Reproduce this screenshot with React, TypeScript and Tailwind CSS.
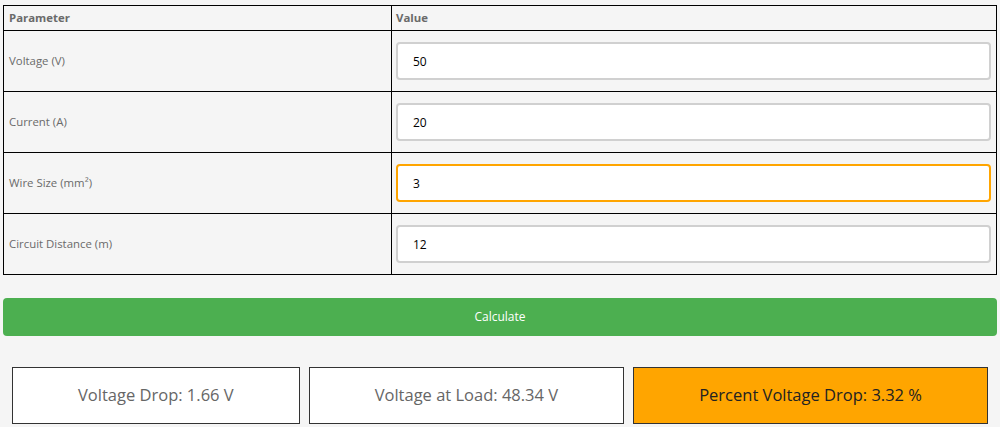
import { useState } from "react";

const rows = [
  { label: "Voltage (V)", value: "50" },
  { label: "Current (A)", value: "20" },
  { label: "Wire Size (mm²)", value: "3", focused: true },
  { label: "Circuit Distance (m)", value: "12" },
];

function App() {
  const [values, setValues] = useState(rows.map((r) => r.value));

  return (
    <main className="min-h-screen bg-[#f5f5f5] px-[3px] pt-[5px] font-['Open_Sans',sans-serif] text-[11.4px] text-[#6a6a6a]">
      <table className="w-full border-collapse border border-black">
        <thead>
          <tr className="h-[25px] text-left">
            <th className="w-[388px] border border-black px-[5px] font-bold">Parameter</th>
            <th className="border border-black px-[4px] font-bold">Value</th>
          </tr>
        </thead>
        <tbody>
          {rows.map((row, i) => (
            <tr key={row.label}>
              <td className="border border-black px-[5px]">{row.label}</td>
              <td className="border border-black py-[11px] pl-[4px] pr-[5px]">
                <input
                  value={values[i]}
                  onChange={(e) =>
                    setValues(values.map((v, j) => (j === i ? e.target.value : v)))
                  }
                  className={
                    row.focused
                      ? "block h-[38px] w-full rounded-[4px] border-2 border-[#ffa500] bg-white px-[15px] text-[12px] text-black outline-none"
                      : "block h-[38px] w-full rounded-[4px] border-2 border-[#d0d0d0] bg-white px-[15px] text-[12px] text-black outline-none"
                  }
                />
              </td>
            </tr>
          ))}
        </tbody>
      </table>

      <button className="mt-[23px] h-[38px] w-full rounded-[4px] bg-[#4caf50] text-[12px] text-white">
        Calculate
      </button>

      <section className="mt-[31px] flex gap-[9px] px-[9px]">
        <div className="flex h-[57px] flex-auto items-center justify-center border border-[#333] bg-white px-5 text-[16.5px] text-[#666]">
          Voltage Drop: 1.66 V
        </div>
        <div className="flex h-[57px] flex-auto items-center justify-center border border-[#333] bg-white px-5 text-[16.5px] text-[#666]">
          Voltage at Load: 48.34 V
        </div>
        <div className="flex h-[57px] flex-auto items-center justify-center border border-[#333] bg-[#ffa500] px-5 text-[16.5px] text-[#222]">
          Percent Voltage Drop: 3.32 %
        </div>
      </section>
    </main>
  );
}

export default App;
